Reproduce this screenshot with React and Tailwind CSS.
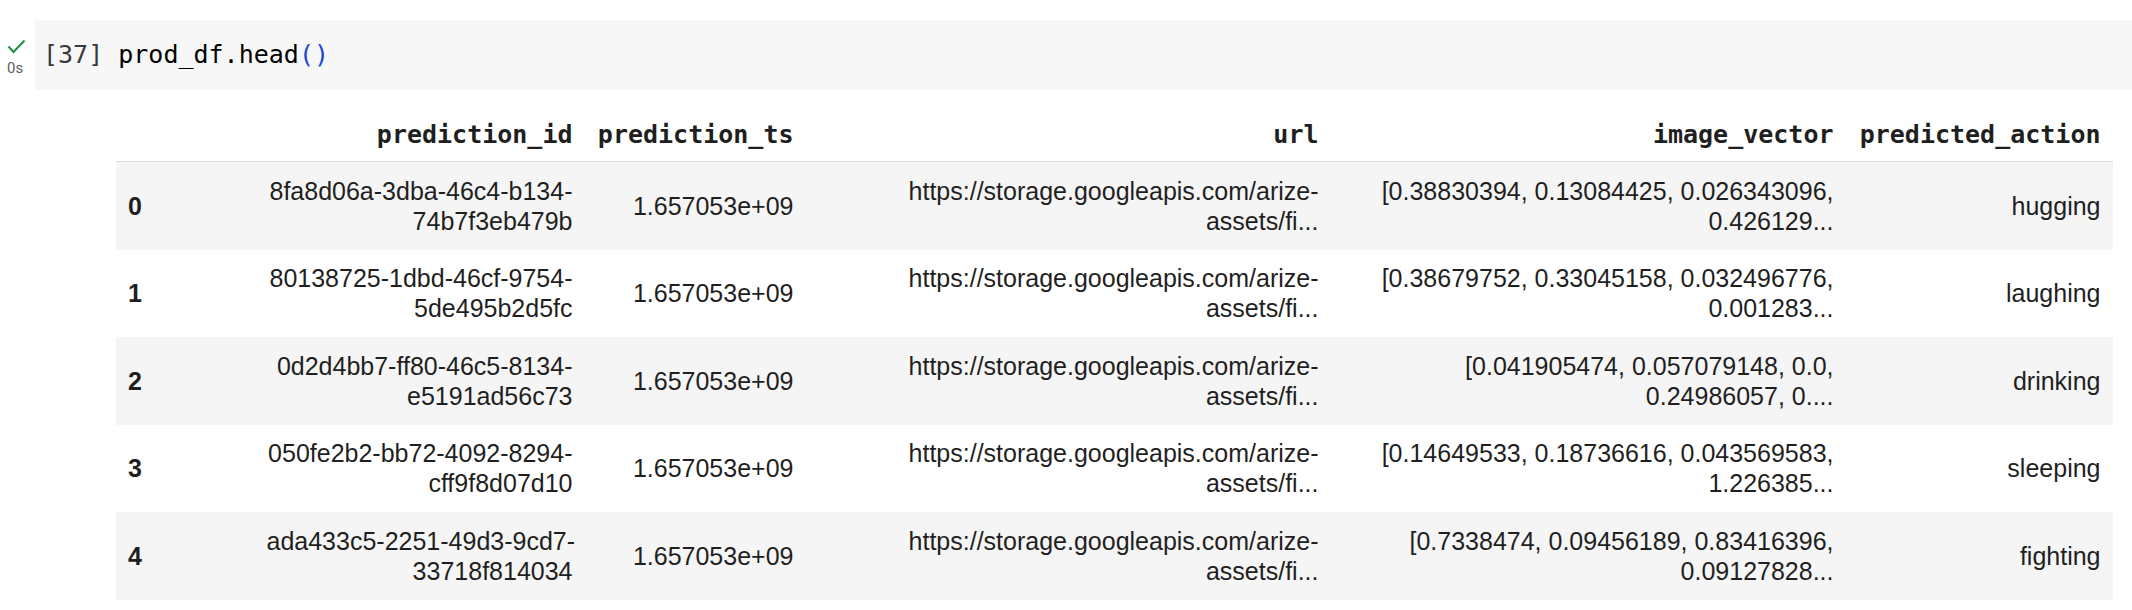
import React from 'react';

const columns = [
    { key: 'id', label: 'prediction_id', width: 'w-[331px]' },
    { key: 'ts', label: 'prediction_ts', width: 'w-[221px]' },
    { key: 'url', label: 'url', width: 'w-[525px]' },
    { key: 'vec', label: 'image_vector', width: 'w-[515px]' },
    { key: 'action', label: 'predicted_action', width: 'w-[267px]' },
];

const rows = [
    {
        id: ['8fa8d06a-3dba-46c4-b134-', '74b7f3eb479b'],
        vec: ['[0.38830394, 0.13084425, 0.026343096,', '0.426129...'],
        action: 'hugging',
    },
    {
        id: ['80138725-1dbd-46cf-9754-', '5de495b2d5fc'],
        vec: ['[0.38679752, 0.33045158, 0.032496776,', '0.001283...'],
        action: 'laughing',
    },
    {
        id: ['0d2d4bb7-ff80-46c5-8134-', 'e5191ad56c73'],
        vec: ['[0.041905474, 0.057079148, 0.0,', '0.24986057, 0....'],
        action: 'drinking',
    },
    {
        id: ['050fe2b2-bb72-4092-8294-', 'cff9f8d07d10'],
        vec: ['[0.14649533, 0.18736616, 0.043569583,', '1.226385...'],
        action: 'sleeping',
    },
    {
        id: ['ada433c5-2251-49d3-9cd7-', '33718f814034'],
        vec: ['[0.7338474, 0.09456189, 0.83416396,', '0.09127828...'],
        action: 'fighting',
    },
];

const url = ['https://storage.googleapis.com/arize-', 'assets/fi...'];

const TwoLines = ({ lines }) => (
    <>
        {lines[0]}
        <br />
        {lines[1]}
    </>
);

const CheckIcon = () => (
    <svg width="19" height="15" viewBox="0 0 19 15" fill="none">
        <path d="M1.5 7.5 L6.5 13 L17.5 1.5" stroke="#1e8e3e" strokeWidth="2" />
    </svg>
);

const App = () => {
    return (
        <div className="w-[2132px] h-[610px] bg-white pt-[20px] overflow-hidden">
            {/* code cell */}
            <div className="flex">
                <div className="w-[35px] pl-[7px] pt-[19px] flex flex-col items-start">
                    <CheckIcon />
                    <span className="mt-[7px] text-[15px] leading-[15px] text-[#616161] font-['Roboto',sans-serif]">0s</span>
                </div>
                <div className="flex-1 h-[70px] bg-[#f7f7f7] flex items-center pl-[8px] font-['DejaVu_Sans_Mono',monospace] text-[25px] leading-[30px] whitespace-pre">
                    <span className="text-[#3a3a3a]">[37] </span>
                    <span className="text-black">prod_df.head</span>
                    <span className="text-[#1a49d1]">()</span>
                </div>
            </div>

            {/* dataframe output */}
            <table className="mt-[16px] ml-[116px] w-[1997px] table-fixed border-collapse font-['Liberation_Sans',Arial,sans-serif] text-[25px] leading-[30px] text-[#1f1f1f]">
                <colgroup>
                    <col className="w-[138px]" />
                    {columns.map(col => (
                        <col key={col.key} className={col.width} />
                    ))}
                </colgroup>
                <thead>
                    <tr className="border-b border-[#dcdcdc]">
                        <th className="px-[12.5px] pt-[14px] pb-[11px]"></th>
                        {columns.map(col => (
                            <th
                                key={col.key}
                                className="px-[12.5px] pt-[14px] pb-[11px] text-right font-bold whitespace-nowrap font-['DejaVu_Sans_Mono',monospace] text-[#1f1f1f]"
                            >
                                {col.label}
                            </th>
                        ))}
                    </tr>
                </thead>
                <tbody>
                    {rows.map((row, i) => (
                        <tr key={i} className={i % 2 === 0 ? 'bg-[#f5f5f5]' : 'bg-white'}>
                            <th className="px-[12px] py-[13.75px] text-left font-bold align-middle">{i}</th>
                            <td className="px-[12.5px] py-[13.75px] text-right whitespace-nowrap align-middle">
                                <TwoLines lines={row.id} />
                            </td>
                            <td className="px-[12.5px] py-[13.75px] text-right whitespace-nowrap align-middle">
                                1.657053e+09
                            </td>
                            <td className="px-[12.5px] py-[13.75px] text-right whitespace-nowrap align-middle">
                                <TwoLines lines={url} />
                            </td>
                            <td className="px-[12.5px] py-[13.75px] text-right whitespace-nowrap align-middle">
                                <TwoLines lines={row.vec} />
                            </td>
                            <td className="px-[12.5px] py-[13.75px] text-right whitespace-nowrap align-middle">
                                {row.action}
                            </td>
                        </tr>
                    ))}
                </tbody>
            </table>
        </div>
    );
};

export default App;
